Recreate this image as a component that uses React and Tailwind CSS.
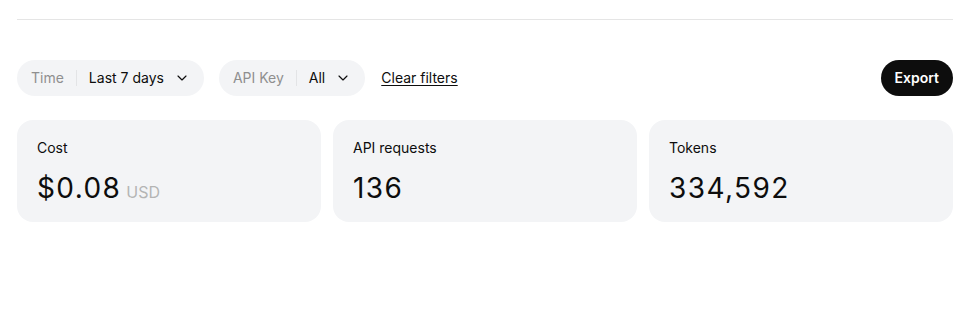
import React from "react";

const Chevron = () => (
  <svg width="16" height="16" viewBox="0 0 24 24" fill="none" stroke="currentColor" strokeWidth="1.75" strokeLinecap="round" strokeLinejoin="round">
    <path d="m6 9 6 6 6-6" />
  </svg>
);

const Pill = ({ label, value }) => (
  <div className="flex items-center h-9 rounded-full bg-[#f3f4f6] pl-[14px] pr-[14px] text-sm">
    <span className="text-[#8f8f8f]">{label}</span>
    <span className="mx-3 h-4 w-px bg-[#e3e4e6]" />
    <span className="text-[#0d0d0d]">{value}</span>
    <span className="ml-[10px] text-[#0d0d0d]"><Chevron /></span>
  </div>
);

const Card = ({ label, value, unit }) => (
  <div className="flex-1 h-[102px] rounded-[16px] bg-[#f3f4f6] px-5 pt-[18px]">
    <div className="text-sm text-[#0d0d0d] leading-5">{label}</div>
    <div className="mt-[14px] flex items-baseline">
      <span className="text-[28px] leading-8 tracking-[0.05em] text-[#0d0d0d]">{value}</span>
      {unit && <span className="ml-[5px] text-base text-[#b4b4b4]">{unit}</span>}
    </div>
  </div>
);

export default function App() {
  return (
    <div className="w-[979px] h-[336px] bg-white" style={{ fontFamily: "Inter, 'Noto Sans', sans-serif" }}>
      <div className="ml-[17px] w-[936px]">
        <div className="h-[20px] border-b border-[#e5e5e5]" />
        <div className="mt-10 flex items-center h-9">
          <Pill label="Time" value="Last 7 days" />
          <div className="ml-[15px]"><Pill label="API Key" value="All" /></div>
          <button className="ml-4 text-sm text-[#0d0d0d] underline underline-offset-2">Clear filters</button>
          <button className="ml-auto h-9 rounded-full bg-[#0d0d0d] px-[14px] text-sm font-semibold text-white">Export</button>
        </div>
        <div className="mt-6 flex gap-3">
          <Card label="Cost" value="$0.08" unit="USD" />
          <Card label="API requests" value="136" />
          <Card label="Tokens" value="334,592" />
        </div>
      </div>
    </div>
  );
}
